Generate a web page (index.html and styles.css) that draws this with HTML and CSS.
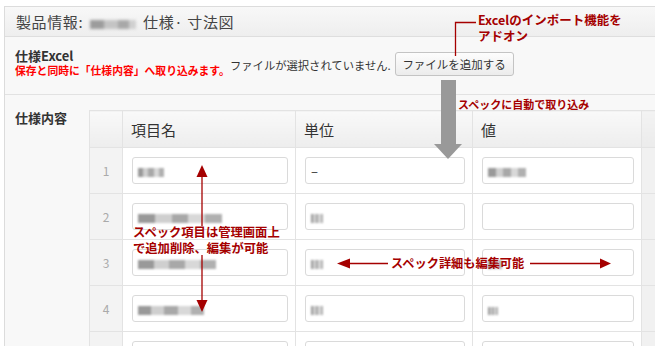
FILE: index.html
```html
<!DOCTYPE html>
<html lang="ja">
<head>
    <meta charset="UTF-8">
    <title>製品情報 仕様・寸法図</title>
    <link rel="stylesheet" href="styles.css">
</head>
<body>
    <div class="panel">
        <div class="panel-head">
            <h2>製品情報: <span class="blur-name"></span> 仕様· 寸法図</h2>
        </div>

        <div class="field field-excel">
            <div class="field-label">
                <strong>仕様Excel</strong>
                <em class="hint">保存と同時に「仕様内容」へ取り込みます。</em>
            </div>
            <span class="file-none">ファイルが選択されていません.</span>
            <button class="file-btn">ファイルを追加する</button>
        </div>

        <div class="field field-spec">
            <div class="field-label"><strong>仕様内容</strong></div>
            <table class="spec">
                <colgroup>
                    <col class="c-num"><col class="c-name"><col class="c-unit"><col class="c-val"><col class="c-rest">
                </colgroup>
                <thead>
                    <tr><th></th><th>項目名</th><th>単位</th><th>値</th><th class="rest"></th></tr>
                </thead>
                <tbody>
                    <tr>
                        <td class="num">1</td>
                        <td><div class="inp"><span class="pix" style="width:26px"></span></div></td>
                        <td><div class="inp">–</div></td>
                        <td><div class="inp"><span class="pix" style="width:38px"></span></div></td>
                        <td class="rest"></td>
                    </tr>
                    <tr>
                        <td class="num">2</td>
                        <td><div class="inp"><span class="pix" style="width:84px"></span></div></td>
                        <td><div class="inp"><span class="pix" style="width:12px"></span></div></td>
                        <td><div class="inp"></div></td>
                        <td class="rest"></td>
                    </tr>
                    <tr>
                        <td class="num">3</td>
                        <td><div class="inp"><span class="pix" style="width:78px"></span></div></td>
                        <td><div class="inp"><span class="pix" style="width:12px"></span></div></td>
                        <td><div class="inp"><span class="pix" style="width:14px"></span></div></td>
                        <td class="rest"></td>
                    </tr>
                    <tr>
                        <td class="num">4</td>
                        <td><div class="inp"><span class="pix" style="width:66px"></span></div></td>
                        <td><div class="inp"><span class="pix" style="width:12px"></span></div></td>
                        <td><div class="inp"><span class="pix pix-sm" style="width:10px"></span></div></td>
                        <td class="rest"></td>
                    </tr>
                    <tr>
                        <td class="num">5</td>
                        <td><div class="inp"></div></td>
                        <td><div class="inp"></div></td>
                        <td><div class="inp"></div></td>
                        <td class="rest"></td>
                    </tr>
                </tbody>
            </table>
        </div>
    </div>

    <!-- annotations drawn over the screenshot -->
    <svg class="arrows" width="655" height="346" viewBox="0 0 655 346">
        <rect x="441" y="80" width="15" height="64" fill="#999"/>
        <polygon points="434,144 462,144 448,159" fill="#999"/>
        <g stroke="#a50000" stroke-width="1.3" fill="none">
            <polyline points="476,22.5 455.5,22.5 455.5,56"/>
            <line x1="202" y1="176" x2="202" y2="226"/>
            <line x1="202" y1="255" x2="202" y2="301"/>
            <line x1="349" y1="263.5" x2="388" y2="263.5"/>
            <line x1="530" y1="263.5" x2="601" y2="263.5"/>
        </g>
        <g fill="#a50000">
            <polygon points="202,165 196.5,177 207.5,177"/>
            <polygon points="202,312 196.5,300 207.5,300"/>
            <polygon points="337,263.5 350,258.5 350,268.5"/>
            <polygon points="611,263.5 600,258.5 600,268.5"/>
        </g>
    </svg>
    <p class="note note-import">Excelのインポート機能を<br>アドオン</p>
    <p class="note note-auto">スペックに自動で取り込み</p>
    <p class="note note-rows">スペック項目は管理画面上<br>で追加削除、編集が可能</p>
    <p class="note note-detail">スペック詳細も編集可能</p>
</body>
</html>
```

FILE: styles.css
```css
body {
    margin: 0;
    width: 655px;
    height: 346px;
    overflow: hidden;
    position: relative;
    background: #fff;
    font-family: "Noto Sans CJK JP", "Noto Sans", sans-serif;
    color: #333;
}

.panel {
    margin: 6px 0 0 4px;
    width: 720px;
    border: 1px solid #dcdcdc;
    background: #f8f8f8;
}

.panel-head {
    height: 29px;
    border-bottom: 1px solid #dedede;
    background: linear-gradient(#f8f8f8, #eeeeee);
}

.panel-head h2 {
    margin: 0;
    padding-left: 11px;
    font-size: 15px;
    font-weight: normal;
    line-height: 29px;
    letter-spacing: 0.6px;
    color: #444;
}

.blur-name {
    display: inline-block;
    width: 46px;
    height: 9px;
    margin: 0 3px;
    vertical-align: -1px;
    background: linear-gradient(90deg, #9c9c9c 0 30%, #c4c4c4 30% 60%, #a8a8a8 60% 85%, #d0d0d0 85%);
    filter: blur(1.8px);
}

.field {
    display: flex;
    align-items: flex-start;
}

.field-label {
    flex: none;
    box-sizing: border-box;
    padding-left: 10px;
    white-space: nowrap;
}

.field-label strong {
    display: block;
    font-size: 13px;
    line-height: 16px;
    color: #333;
}

.field-excel {
    height: 58px;
    padding-top: 11px;
    box-sizing: border-box;
    border-bottom: 1px solid #e2e2e2;
}

.field-excel .field-label {
    width: 225px;
}

.hint {
    display: block;
    font-style: normal;
    font-weight: bold;
    font-size: 10.8px;
    line-height: 13px;
    color: #f00;
}

.file-none {
    margin-top: 10px;
    font-size: 11.3px;
    line-height: 14px;
    color: #333;
}

.file-btn {
    margin: 4px 0 0 4px;
    width: 119px;
    height: 24px;
    padding: 0;
    border: 1px solid #c4c4c4;
    border-radius: 3px;
    background: linear-gradient(#fdfdfd, #ececec);
    font-family: inherit;
    font-size: 11.5px;
    color: #333;
}

.field-spec {
    padding-top: 15px;
}

.field-spec .field-label {
    width: 84px;
}

.spec {
    border-collapse: collapse;
    table-layout: fixed;
    width: 620px;
    background: #fff;
}

.c-num { width: 33px; }
.c-name { width: 173px; }
.c-unit { width: 177px; }
.c-val { width: 169px; }
.c-rest { width: 68px; }

.spec th,
.spec td {
    border: 1px solid #e3e3e3;
    padding: 0;
}

.spec th {
    height: 36px;
    padding-left: 8px;
    text-align: left;
    font-size: 15px;
    font-weight: normal;
    color: #333;
    background: linear-gradient(#f9f9f9, #ededed);
}

.spec td {
    height: 27px;
    padding: 9px 7px 9px 9px;
}

.spec td.num {
    padding: 0;
    text-align: center;
    font-size: 12px;
    color: #aaa;
    background: #f3f3f3;
}

.spec .rest {
    background: #f1f1f1;
}

.spec th.rest {
    background: linear-gradient(#f3f3f3, #ebebeb);
}

.inp {
    box-sizing: border-box;
    height: 27px;
    padding: 0 5px;
    border: 1px solid #dadada;
    border-radius: 3px;
    background: #fff;
    font-size: 13px;
    line-height: 25px;
    color: #333;
}

.pix {
    display: inline-block;
    height: 9px;
    vertical-align: -1px;
    background: linear-gradient(90deg, #999 0 20%, #cfcfcf 20% 40%, #a8a8a8 40% 60%, #d8d8d8 60% 80%, #b0b0b0 80%);
    filter: blur(1px);
}

.pix-sm {
    height: 8px;
}

.arrows {
    position: absolute;
    left: 0;
    top: 0;
}

.note {
    position: absolute;
    margin: 0;
    font-weight: bold;
    color: #a50000;
    white-space: nowrap;
}

.note-import {
    left: 478px;
    top: 12px;
    font-size: 12.5px;
    line-height: 16px;
}

.note-auto {
    left: 458px;
    top: 97px;
    font-size: 11px;
    line-height: 14px;
}

.note-rows {
    left: 133px;
    top: 224px;
    font-size: 12.3px;
    line-height: 16px;
}

.note-detail {
    left: 391px;
    top: 255px;
    font-size: 12.2px;
    line-height: 16px;
}
```
